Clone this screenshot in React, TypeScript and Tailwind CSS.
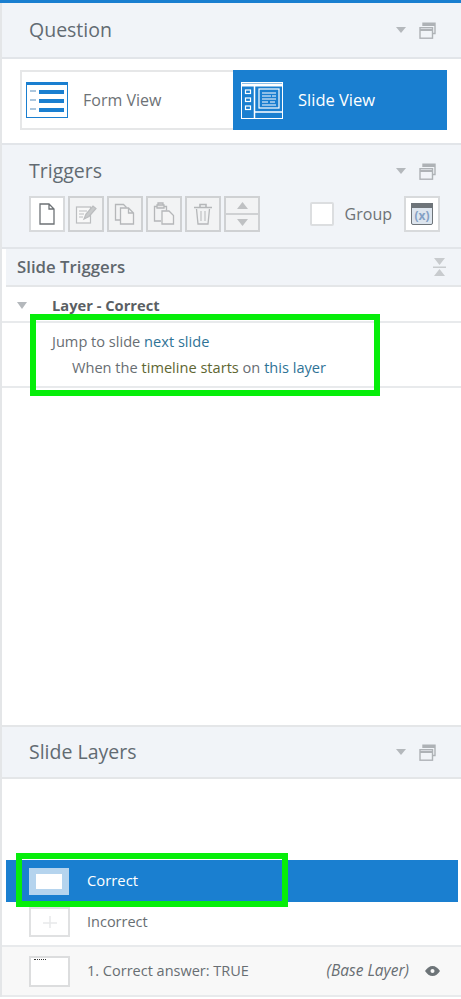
const font = "font-['Open_Sans',sans-serif]";

function PanelControls() {
  return (
    <div className="flex items-center gap-[12px]">
      <svg width="12" height="8" viewBox="0 0 12 8">
        <path d="M1 1h10L6 7z" fill="#b4b8bc" />
      </svg>
      <svg width="17" height="17" viewBox="0 0 17 17" fill="none">
        <path d="M4 4V1.200h12v10.300h-2.500" stroke="#aeb2b6" strokeWidth="1.400" />
        <path d="M4 3h12" stroke="#aeb2b6" strokeWidth="2" />
        <rect x="1" y="5.700" width="12.500" height="10.500" stroke="#aeb2b6" strokeWidth="1.400" fill="#f1f4f8" />
        <path d="M1 8h12.500" stroke="#aeb2b6" strokeWidth="2" />
      </svg>
    </div>
  );
}

function PanelTitle({ title }: { title: string }) {
  return (
    <div className="flex items-center justify-between pl-[27px] pr-[25px]">
      <span className="text-[19.5px] leading-[28px] text-[#626b72]">{title}</span>
      <PanelControls />
    </div>
  );
}

function ToolButton({ children, active }: { children: React.ReactNode; active?: boolean }) {
  return (
    <div
      className={`flex h-[36px] w-[36px] items-center justify-center border-2 ${
        active ? "border-[#d8dadc] bg-white" : "border-[#cfd1d3] bg-[#f2f3f4]"
      }`}
    >
      {children}
    </div>
  );
}

function FormViewIcon() {
  return (
    <svg width="42" height="36" viewBox="0 0 42 36" fill="none">
      <rect x="0.500" y="0.500" width="41" height="35" fill="#fff" stroke="#1a7fd0" />
      <rect x="0" y="0" width="42" height="3" fill="#1a7fd0" />
      <path d="M4 9h6M4 18h6M4 27h6" stroke="#5a8fbd" strokeWidth="1.200" />
      <path d="M13 10h25M13 19h25M13 28h25" stroke="#1a7fd0" strokeWidth="4" />
    </svg>
  );
}

function SlideViewIcon() {
  return (
    <svg width="42" height="37" viewBox="0 0 42 37" fill="none" stroke="#fff">
      <rect x="0.500" y="0.500" width="41" height="36" strokeWidth="1" />
      <path d="M0 3h42" strokeWidth="3" />
      <path d="M13.500 3v33M14 30h28" strokeWidth="1.500" />
      <rect x="4.500" y="8" width="5" height="3.500" strokeWidth="1.200" />
      <rect x="4.500" y="16" width="5" height="3.500" strokeWidth="1.200" />
      <rect x="4.500" y="24" width="5" height="3.500" strokeWidth="1.200" />
      <rect x="18" y="7" width="20" height="19" strokeWidth="1.200" />
      <path d="M21 11h14M21 14h9M31 14h4M21 17h14M21 20h6M29 20h5M21 23h14" strokeWidth="1" />
    </svg>
  );
}

export default function App() {
  return (
    <div className={`relative h-[999px] w-[461px] overflow-hidden bg-white ${font}`}>
      <div className="h-[3px] bg-[#1a7fd0]" />
      <div className="border-l-2 border-[#e4e6e8]">
        {/* Question */}
        <div className="flex h-[56px] items-center border-b-2 border-[#e2e5e9] bg-[#f1f4f8]">
          <div className="w-full">
            <PanelTitle title="Question" />
          </div>
        </div>
        <div className="h-[86px] border-b-2 border-[#e2e5e9] pl-[18px] pr-[14px] pt-[11px]">
          <div className="flex h-[60px] border-2 border-[#e6e7e8]">
            <div className="flex w-[211px] items-center gap-[15px] pl-[4px] text-[16px] text-[#6d7276]">
              <FormViewIcon />
              <span>Form View</span>
            </div>
            <div className="-my-[2px] -mr-[2px] flex flex-1 items-center gap-[15px] bg-[#1a7fd0] pl-[8px] text-[16.5px] text-white">
              <SlideViewIcon />
              <span>Slide View</span>
            </div>
          </div>
        </div>

        {/* Triggers */}
        <div className="h-[104px] border-b-2 border-[#e2e5e9] bg-[#f1f4f8] pt-[12px]">
          <PanelTitle title="Triggers" />
          <div className="mt-[11px] flex items-center pl-[27px] pr-[21px]">
            <div className="flex gap-[3px]">
              <ToolButton active>
                <svg width="16" height="22" viewBox="0 0 16 22" fill="none" stroke="#6d7276" strokeWidth="1.300">
                  <path d="M1 1h9l5 5v15H1zM10 1v5h5" />
                </svg>
              </ToolButton>
              <ToolButton>
                <svg width="22" height="22" viewBox="0 0 22 22" fill="none" stroke="#bbbdbf" strokeWidth="1.200">
                  <rect x="1.500" y="4" width="14" height="16" fill="#f8f8f8" />
                  <path d="M4 8h8M4 11h5M4 14h4" />
                  <path d="M9 16l2-5 7-8 3 2.500-7 8z" fill="#c8cacb" />
                </svg>
              </ToolButton>
              <ToolButton>
                <svg width="22" height="22" viewBox="0 0 22 22" fill="none" stroke="#b5b7b9" strokeWidth="1.300">
                  <path d="M7 17H1.500V1.500h8l3 3" />
                  <path d="M6.500 5h8l5 5v11h-13zM14.500 5v5h5" fill="#f5f5f5" />
                </svg>
              </ToolButton>
              <ToolButton>
                <svg width="22" height="24" viewBox="0 0 22 24" fill="none" stroke="#b5b7b9" strokeWidth="1.300">
                  <path d="M8 19H1.500V4.500h12v4" />
                  <path d="M5 3h5V1h-5zM4 3h7v3H4z" fill="#e8e8e8" />
                  <path d="M9 9h7l4.500 4.500V22H9z" fill="#f5f5f5" />
                </svg>
              </ToolButton>
              <ToolButton>
                <svg width="20" height="22" viewBox="0 0 20 22" fill="none" stroke="#b5b7b9" strokeWidth="1.300">
                  <path d="M1 4.500h18M7 4V1.500h6V4" strokeWidth="1.600" />
                  <path d="M3.500 6l1.500 15h10l1.500-15" />
                  <path d="M8 8v10M12 8v10" strokeWidth="1" />
                </svg>
              </ToolButton>
              <div className="flex h-[36px] w-[36px] flex-col border-2 border-[#cfd1d3] bg-[#f2f3f4]">
                <div className="flex flex-1 items-center justify-center border-b-2 border-[#cfd1d3]">
                  <svg width="11" height="7" viewBox="0 0 11 7"><path d="M0 7h11L5.500 0z" fill="#bfc1c3" /></svg>
                </div>
                <div className="flex flex-1 items-center justify-center">
                  <svg width="11" height="7" viewBox="0 0 11 7"><path d="M0 0h11L5.500 7z" fill="#bfc1c3" /></svg>
                </div>
              </div>
            </div>
            <div className="ml-auto flex items-center">
              <div className="h-[24px] w-[24px] rounded-[2px] border-2 border-[#dcdee0] bg-white" />
              <span className="ml-[11px] text-[16px] text-[#6d7276]">Group</span>
              <div className="ml-[12px] flex h-[36px] w-[36px] items-center justify-center border-2 border-[#d8dadc] bg-white">
                <svg width="22" height="22" viewBox="0 0 22 22">
                  <rect x="0.500" y="0.500" width="21" height="21" rx="1.500" fill="#dde5ee" stroke="#6e7479" />
                  <rect x="0" y="0" width="22" height="5" fill="#6e7479" />
                  <text x="11" y="17" fontSize="12" fontWeight="700" textAnchor="middle" fill="#84a0c4" fontFamily="Open Sans">(x)</text>
                </svg>
              </div>
            </div>
          </div>
        </div>

        {/* Trigger list */}
        <div className="ml-[4px] flex h-[38px] items-center justify-between border-b-2 border-[#e4e6e8] bg-[#f1f4f8] pl-[11px] pr-[15px]">
          <span className="text-[16.8px] font-semibold text-[#5f676d]">Slide Triggers</span>
          <svg width="13" height="18" viewBox="0 0 13 18">
            <path d="M1 0h11L6.500 7zM0 8.500h13V10H0zM6.500 11l5.500 7H1z" fill="#c8cbce" />
          </svg>
        </div>
        <div className="flex h-[36px] items-center border-b-2 border-[#e8eaec] pl-[15px] pt-[2px]">
          <svg width="10" height="7" viewBox="0 0 10 7"><path d="M0 0h10L5 7z" fill="#b4b8bc" /></svg>
          <span className="ml-[25px] text-[14.7px] font-bold text-[#5a5f63]">Layer - Correct</span>
        </div>
        <div className="h-[65px] border-b-2 border-[#e8eaec] pl-[50px] pt-[5px] text-[14.6px] leading-[26px] text-[#686e73]">
          <div>
            Jump to slide <span className="text-[#2f7396]">next slide</span>
          </div>
          <div className="pl-[20px]">
            When the <span className="text-[#5e6632]">timeline starts</span> on{" "}
            <span className="text-[#2f7396]">this layer</span>
          </div>
        </div>
        <div className="h-[337px]" />

        {/* Slide Layers */}
        <div className="flex h-[54px] items-center border-y-2 border-[#e4e6e8] bg-[#f1f4f8]">
          <div className="w-full">
            <PanelTitle title="Slide Layers" />
          </div>
        </div>
        <div className="h-[81px]" />
        <div className="ml-[4px] mr-[3px] flex h-[42px] items-center bg-[#1a7fd0] pl-[23px] text-[14.8px] text-white">
          <div className="flex h-[27px] w-[40px] items-center justify-center bg-[#b5d4ee]">
            <div className="h-[15px] w-[26px] bg-white" />
          </div>
          <span className="ml-[18px] -mt-[2px]">Correct</span>
        </div>
        <div className="flex h-[45px] items-center border-b-2 border-[#e8eaec] pb-[3px] pl-[27px] text-[14.5px] text-[#686e73]">
          <div className="flex h-[30px] w-[41px] items-center justify-center border-2 border-[#e0e1e2]">
            <svg width="16" height="14" viewBox="0 0 16 14">
              <path d="M8 1v12M1 8h14" stroke="#e8e9ea" strokeWidth="1.500" />
            </svg>
          </div>
          <span className="ml-[17px]">Incorrect</span>
        </div>
        <div className="flex h-[50px] items-center border-b-2 border-[#e8eaec] bg-[#f8f8f8] pl-[27px] pr-[21px] text-[14.5px] text-[#686e73]">
          <div className="relative h-[31px] w-[41px] border-2 border-[#dcddde] bg-white">
            <div className="absolute left-[3px] top-[1px] h-[1px] w-[12px] border-t border-dotted border-[#333]" />
          </div>
          <span className="ml-[17px]">1. Correct answer: TRUE</span>
          <span className="ml-auto text-[15.5px] italic">(Base Layer)</span>
          <svg className="ml-[16px]" width="15" height="10" viewBox="0 0 15 10">
            <path d="M0 5c2-3 4.500-5 7.500-5S13 2 15 5c-2 3-4.500 5-7.500 5S2 8 0 5z" fill="#6d7478" />
            <circle cx="7.500" cy="5" r="2" fill="#f8f8f8" />
          </svg>
        </div>
      </div>

      {/* Green highlight boxes */}
      <div className="absolute left-[30px] top-[314px] h-[82px] w-[350px] border-[6px] border-[#06ee0a]" />
      <div className="absolute left-[16px] top-[853px] h-[54px] w-[272px] border-[6px] border-[#06ee0a]" />
    </div>
  );
}
